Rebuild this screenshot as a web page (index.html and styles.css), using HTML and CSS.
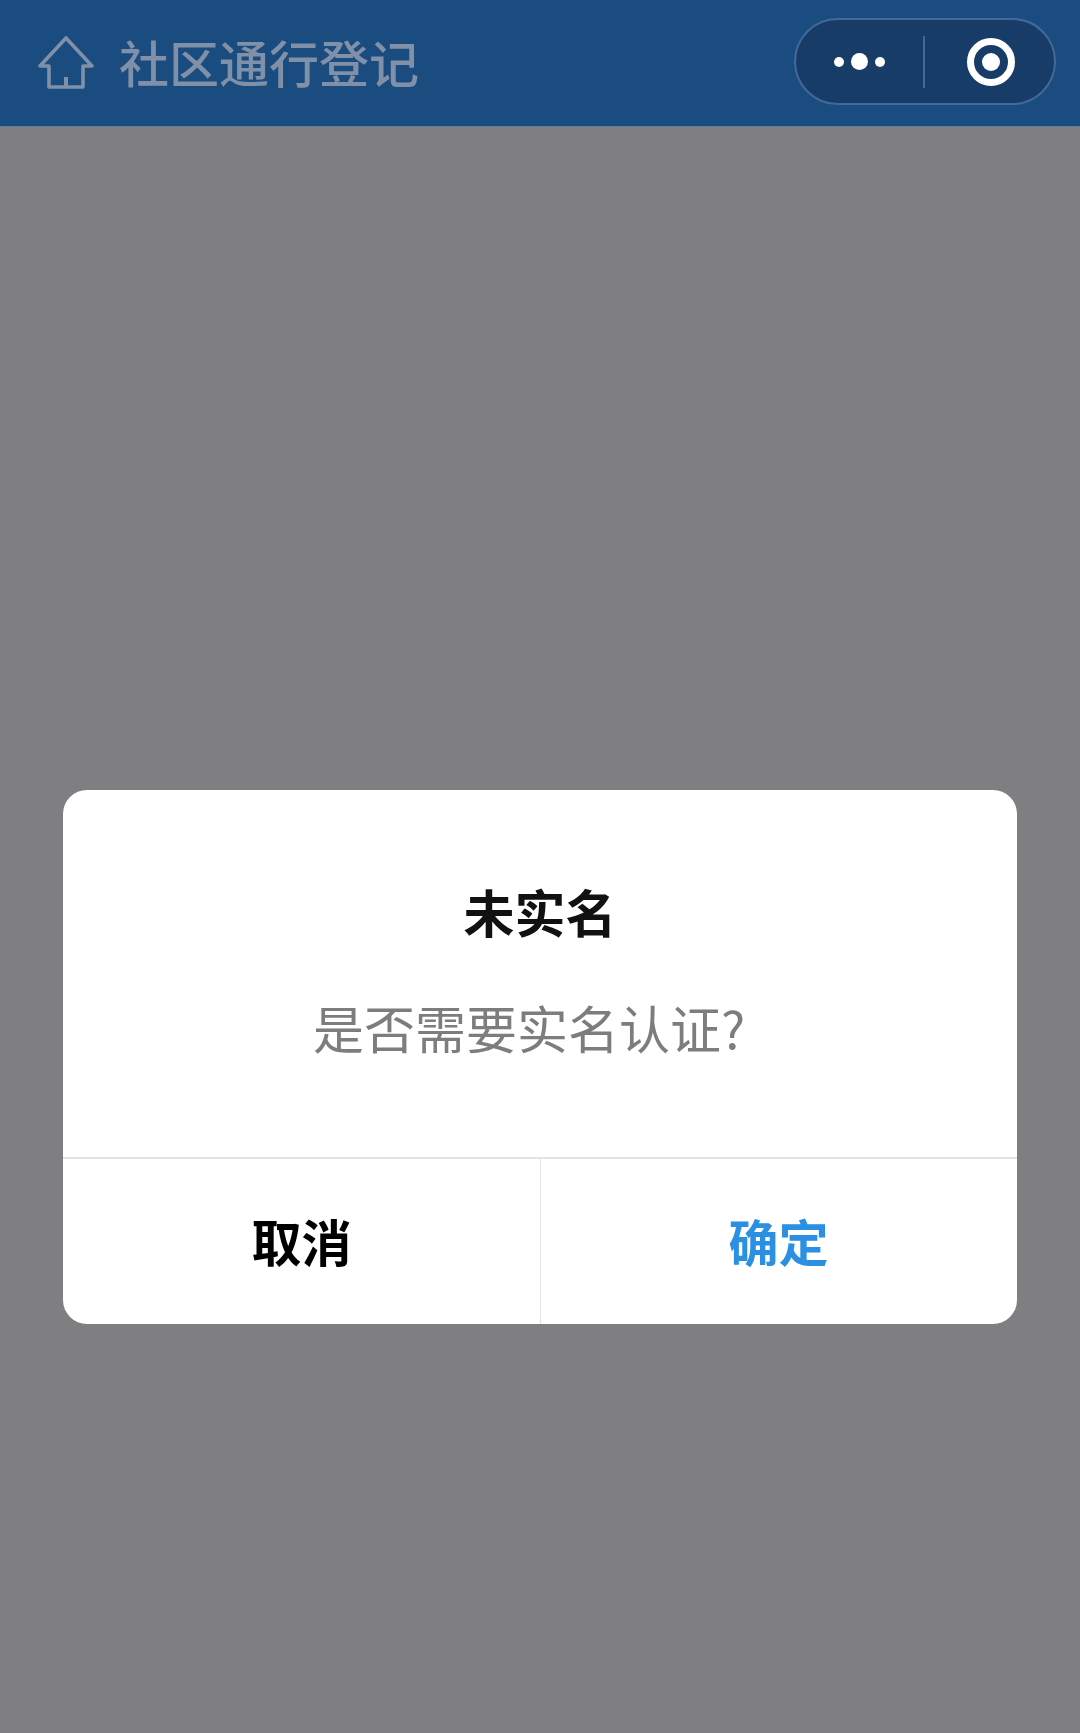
FILE: index.html
```html
<!DOCTYPE html>
<html lang="zh-CN">
<head>
    <meta charset="UTF-8">
    <meta name="viewport" content="width=device-width, initial-scale=1.0">
    <title>社区通行登记</title>
    <link rel="stylesheet" href="styles.css">
</head>
<body>
    <header class="topbar">
        <div class="nav">
            <svg class="home" viewBox="0 0 56 54" fill="none" stroke="#7f90a8" stroke-width="3.6" stroke-linejoin="round">
                <path d="M28 2 L54 30 H45 V51 H11 V30 H2 Z"/>
                <path d="M28 41 V51" stroke-width="4"/>
            </svg>
            <span class="nav-title">社区通行登记</span>
        </div>
        <div class="capsule">
            <div class="capsule-btn more">
                <span class="dot"></span>
                <span class="dot big"></span>
                <span class="dot"></span>
            </div>
            <div class="capsule-line"></div>
            <div class="capsule-btn record">
                <span class="ring"></span>
            </div>
        </div>
    </header>
    <main class="mask">
        <div class="dialog">
            <div class="dialog-body">
                <div class="dialog-title">未实名</div>
                <div class="dialog-text">是否需要实名认证?</div>
            </div>
            <div class="dialog-actions">
                <div class="action cancel">取消</div>
                <div class="action ok">确定</div>
            </div>
        </div>
    </main>
</body>
</html>
```
FILE: styles.css
```css
* {
    box-sizing: border-box;
}
body {
    margin: 0;
    height: 1733px;
    overflow: hidden;
    background: #7f7f81;
    font-family: "Noto Sans CJK SC", "Liberation Sans", sans-serif;
}
.topbar {
    height: 127px;
    background: #1b4c7f;
    border-bottom: 1px solid #5f7b9e;
    display: flex;
    justify-content: space-between;
    padding: 18px 24px 0 38px;
}
.nav {
    display: flex;
    align-items: center;
    height: 90px;
}
.home {
    width: 56px;
    height: 54px;
    margin-right: 25px;
}
.nav-title {
    margin-bottom: 5px;
    font-size: 50px;
    font-weight: 500;
    line-height: 60px;
    color: #7f90a8;
}
.capsule {
    width: 262px;
    height: 87px;
    border: 2px solid #43699a;
    border-radius: 44px;
    background: #173c68;
    display: flex;
    align-items: center;
}
.capsule-btn {
    display: flex;
    justify-content: center;
    align-items: center;
}
.capsule-btn.more {
    width: 127px;
    gap: 7px;
}
.capsule-btn.record {
    flex: 1;
    padding-left: 3px;
}
.capsule-line {
    width: 2px;
    height: 52px;
    background: #43699a;
}
.dot {
    width: 10px;
    height: 10px;
    border-radius: 50%;
    background: #fff;
}
.dot.big {
    width: 17px;
    height: 17px;
}
.ring {
    width: 48px;
    height: 48px;
    border: 7px solid #fff;
    border-radius: 50%;
    display: flex;
    justify-content: center;
    align-items: center;
}
.ring::after {
    content: "";
    width: 18px;
    height: 18px;
    border-radius: 50%;
    background: #fff;
}
.mask {
    padding: 663px 63px 0;
}
.dialog {
    height: 534px;
    background: #fff;
    border-radius: 24px;
    overflow: hidden;
    display: flex;
    flex-direction: column;
}
.dialog-body {
    height: 367px;
    padding-top: 85px;
    text-align: center;
}
.dialog-title {
    font-size: 51px;
    font-weight: 700;
    line-height: 72px;
    color: #111;
}
.dialog-text {
    margin-top: 44px;
    padding-right: 22px;
    font-size: 51px;
    line-height: 72px;
    color: #7d7d7d;
}
.dialog-actions {
    flex: 1;
    display: flex;
    border-top: 2px solid #e3e3e3;
}
.action {
    flex: 1;
    display: flex;
    justify-content: center;
    align-items: center;
    padding-bottom: 4px;
    font-size: 50px;
    font-weight: 700;
}
.cancel {
    color: #000;
    box-shadow: 1px 0 0 #e3e3e3;
}
.ok {
    color: #2b8fe2;
}
```
